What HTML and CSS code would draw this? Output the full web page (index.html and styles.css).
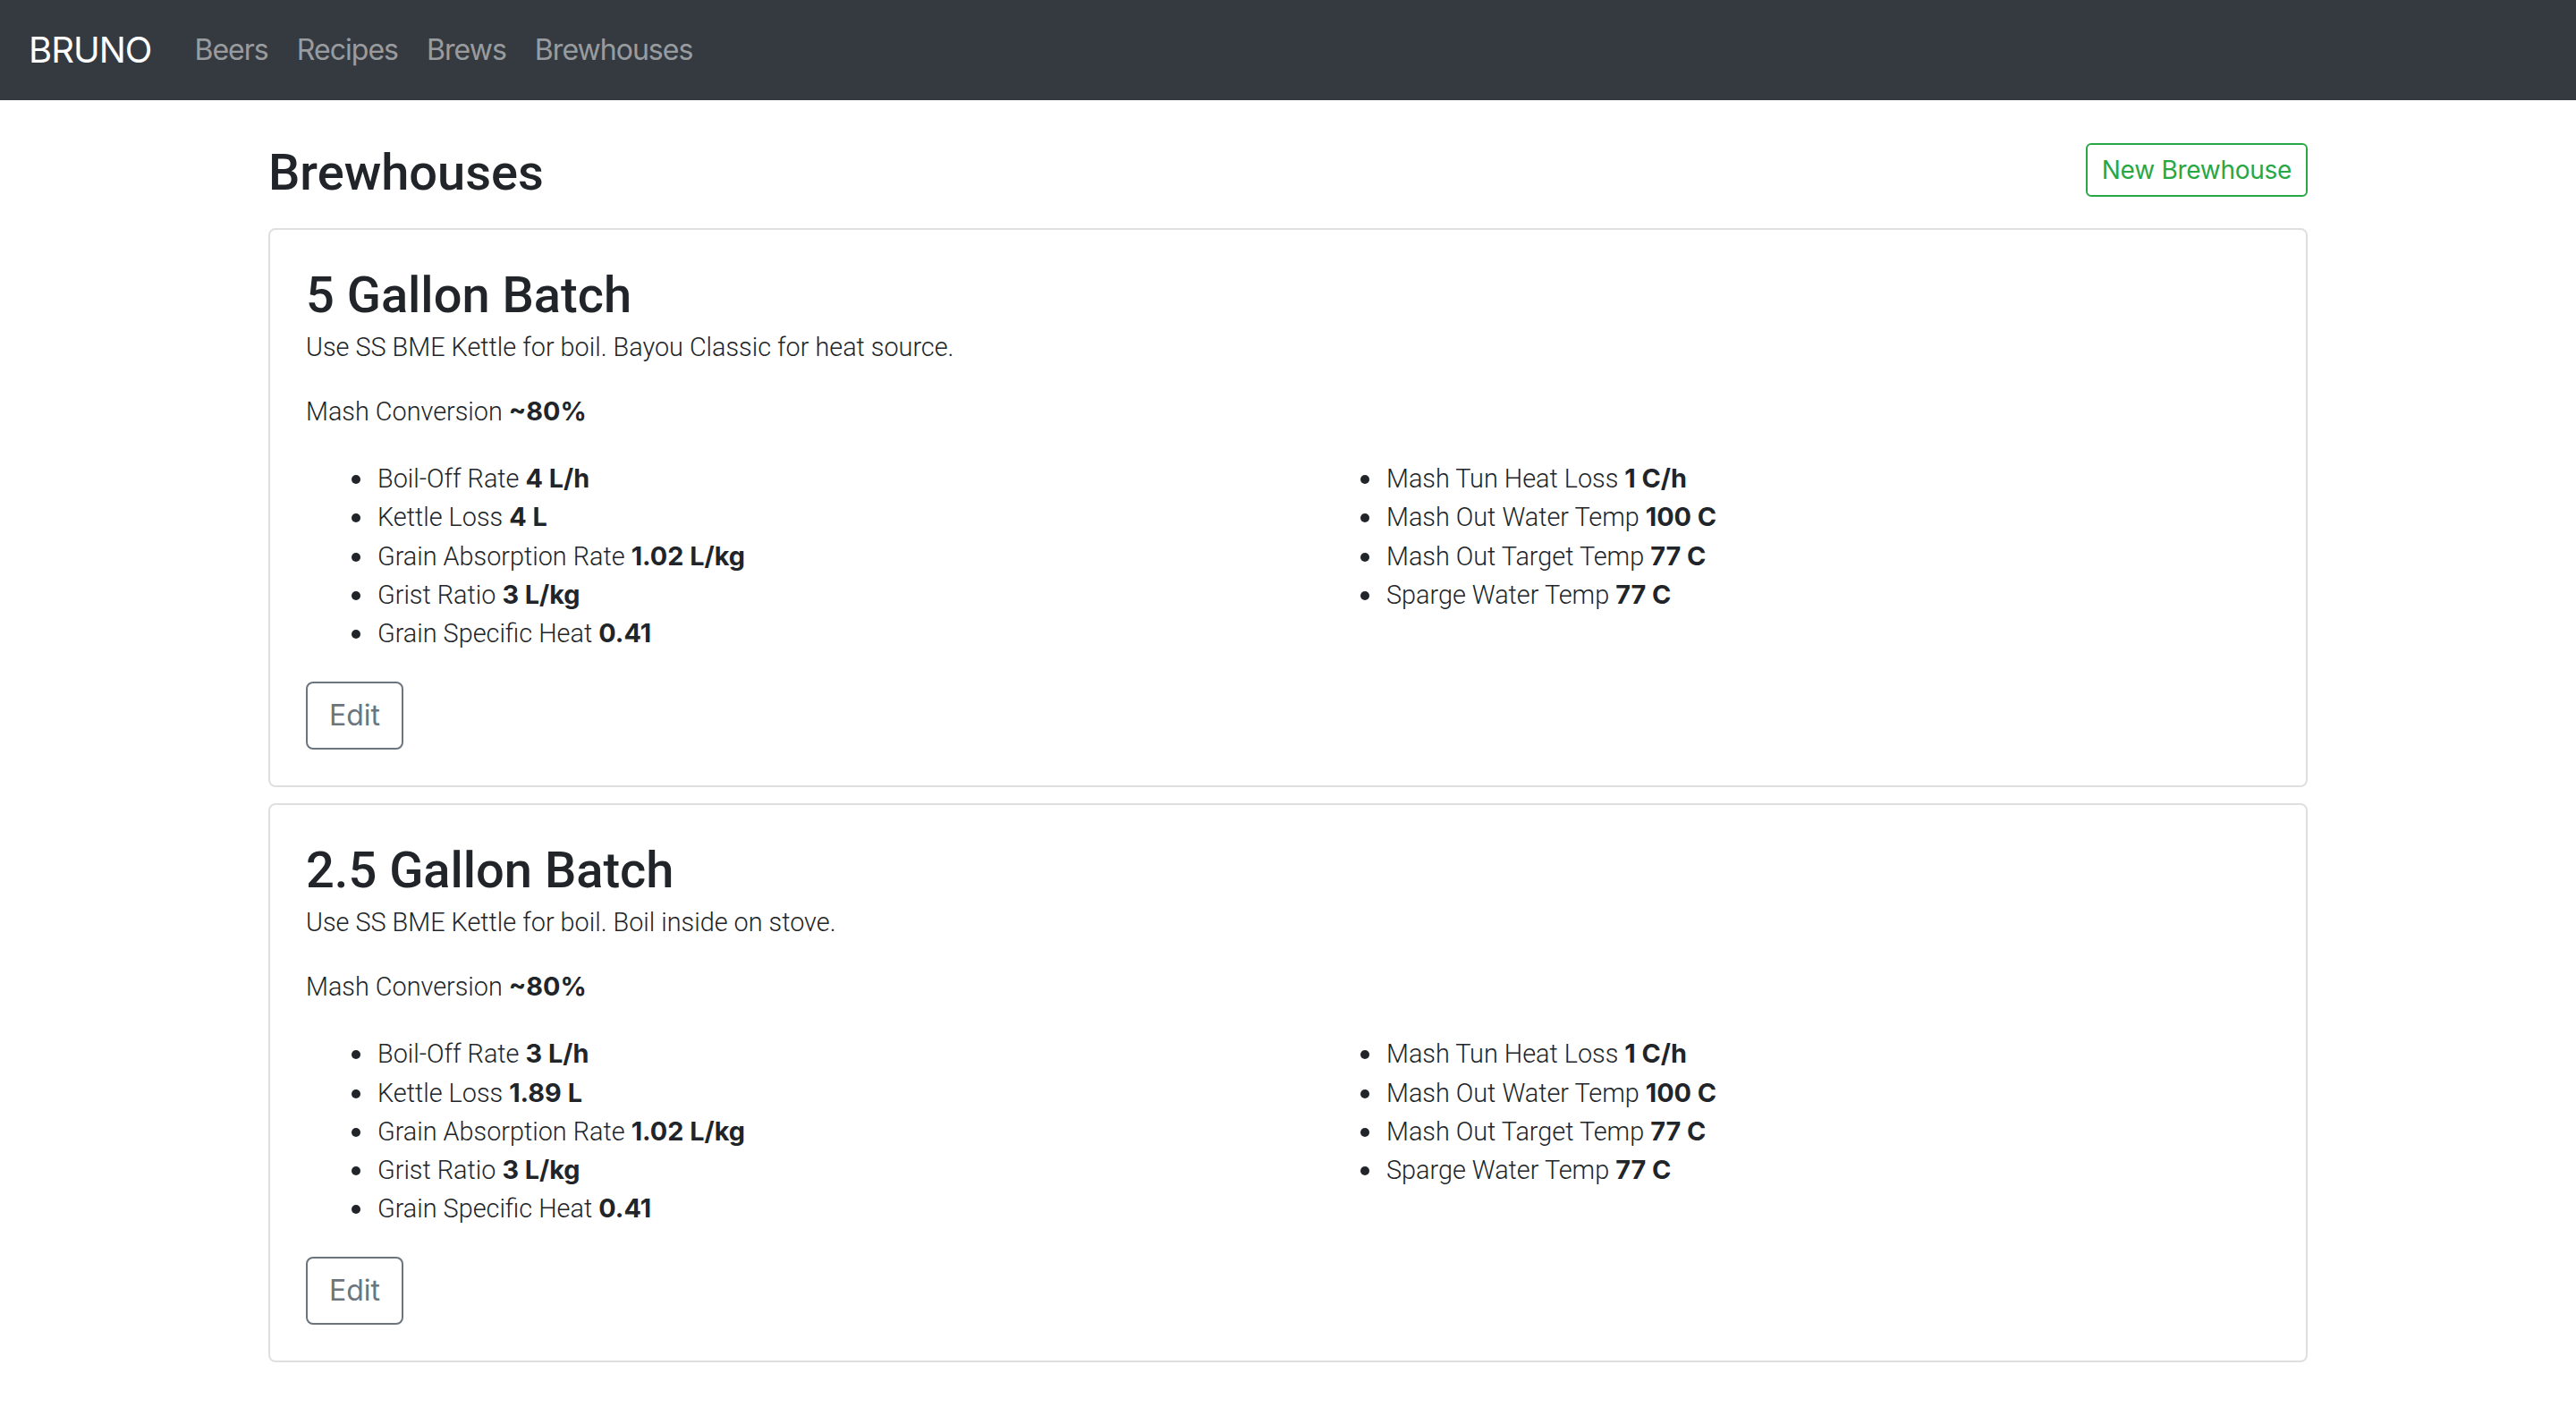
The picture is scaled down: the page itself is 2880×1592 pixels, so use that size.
FILE: index.html
```html
<!DOCTYPE html>
<html lang="en">
<head>
<meta charset="utf-8">
<title>Bruno - Brewhouses</title>
<link rel="stylesheet" href="styles.css">
</head>
<body>
<nav class="navbar">
  <a class="brand" href="#">BRUNO</a>
  <a class="nav-link" href="#">Beers</a>
  <a class="nav-link" href="#">Recipes</a>
  <a class="nav-link" href="#">Brews</a>
  <a class="nav-link" href="#">Brewhouses</a>
</nav>
<main class="container">
  <div class="page-header">
    <h3 class="page-title">Brewhouses</h3>
    <a class="btn btn-sm btn-outline-success" href="#">New Brewhouse</a>
  </div>

  <div class="card">
    <div class="card-body">
      <h3 class="card-title">5 Gallon Batch</h3>
      <p class="desc light">Use SS BME Kettle for boil. Bayou Classic for heat source.</p>
      <p class="mash light">Mash Conversion <strong>~80%</strong></p>
      <div class="row">
        <ul class="props light">
          <li>Boil-Off Rate <strong>4 L/h</strong></li>
          <li>Kettle Loss <strong>4 L</strong></li>
          <li>Grain Absorption Rate <strong>1.02 L/kg</strong></li>
          <li>Grist Ratio <strong>3 L/kg</strong></li>
          <li>Grain Specific Heat <strong>0.41</strong></li>
        </ul>
        <ul class="props light">
          <li>Mash Tun Heat Loss <strong>1 C/h</strong></li>
          <li>Mash Out Water Temp <strong>100 C</strong></li>
          <li>Mash Out Target Temp <strong>77 C</strong></li>
          <li>Sparge Water Temp <strong>77 C</strong></li>
        </ul>
      </div>
      <a class="btn btn-outline-secondary" href="#">Edit</a>
    </div>
  </div>

  <div class="card">
    <div class="card-body">
      <h3 class="card-title">2.5 Gallon Batch</h3>
      <p class="desc light">Use SS BME Kettle for boil. Boil inside on stove.</p>
      <p class="mash light">Mash Conversion <strong>~80%</strong></p>
      <div class="row">
        <ul class="props light">
          <li>Boil-Off Rate <strong>3 L/h</strong></li>
          <li>Kettle Loss <strong>1.89 L</strong></li>
          <li>Grain Absorption Rate <strong>1.02 L/kg</strong></li>
          <li>Grist Ratio <strong>3 L/kg</strong></li>
          <li>Grain Specific Heat <strong>0.41</strong></li>
        </ul>
        <ul class="props light">
          <li>Mash Tun Heat Loss <strong>1 C/h</strong></li>
          <li>Mash Out Water Temp <strong>100 C</strong></li>
          <li>Mash Out Target Temp <strong>77 C</strong></li>
          <li>Sparge Water Temp <strong>77 C</strong></li>
        </ul>
      </div>
      <a class="btn btn-outline-secondary" href="#">Edit</a>
    </div>
  </div>
</main>
</body>
</html>
```

FILE: styles.css
```css
* { box-sizing: border-box; }

body {
  margin: 0;
  font-family: Inter, "Noto Sans", "Liberation Sans", sans-serif;
  font-size: 32px;
  line-height: 1.5;
  color: #212529;
  background: #fff;
}

a { text-decoration: none; }

.navbar {
  display: flex;
  align-items: center;
  background: #343a40;
  padding: 16px 32px;
}

.brand {
  color: #fff;
  font-size: 40px;
  line-height: 60px;
  padding: 10px 0;
  margin-right: 32px;
  letter-spacing: -0.025em;
}

.nav-link {
  color: rgba(255, 255, 255, 0.5);
  font-size: 32px;
  line-height: 48px;
  padding: 16px;
  letter-spacing: -0.03em;
}

.container {
  width: 2280px;
  margin: 0 auto;
  padding-top: 48px;
}

.page-header {
  display: flex;
  justify-content: space-between;
  align-items: flex-start;
  margin-bottom: 28px;
}

.page-title,
.card-title {
  margin: 0;
  font-family: Roboto, Inter, sans-serif;
  font-size: 56px;
  font-weight: 500;
  line-height: 67px;
}

.btn {
  display: inline-block;
  border: 2px solid transparent;
  background: transparent;
  text-align: center;
}

.btn-sm {
  font-size: 28px;
  line-height: 42px;
  padding: 7px 16px;
  border-radius: 6px;
  letter-spacing: -0.01em;
}

.btn-outline-success {
  color: #28a745;
  border-color: #28a745;
}

.btn-outline-secondary {
  color: #6c757d;
  border-color: #6c757d;
  font-size: 32px;
  line-height: 48px;
  padding: 12px 24px;
  border-radius: 8px;
}

.card {
  border: 2px solid rgba(0, 0, 0, 0.125);
  border-radius: 8px;
  margin-bottom: 18px;
}

.card-body {
  padding: 40px;
}

.light {
  font-family: Roboto, Inter, "Noto Sans", sans-serif;
  font-weight: 300;
}

.light strong {
  font-family: Inter, "Noto Sans", sans-serif;
  font-weight: 700;
  line-height: 1;
}

.desc {
  margin: 0 0 27px;
  font-size: 28.8px;
  line-height: 48px;
}

.mash {
  margin: 0 0 32px;
  font-size: 28.8px;
  line-height: 43.2px;
}

.row {
  display: grid;
  grid-template-columns: 1fr 1fr;
  column-gap: 60px;
}

.props {
  margin: 0 0 32px;
  padding-left: 80px;
  font-size: 28.8px;
  line-height: 43.2px;
  list-style: none;
}

.props li {
  position: relative;
}

.props li::before {
  content: "";
  position: absolute;
  left: -29px;
  top: 17px;
  width: 10px;
  height: 10px;
  border-radius: 50%;
  background: #212529;
}

strong { font-weight: 700; }
```
